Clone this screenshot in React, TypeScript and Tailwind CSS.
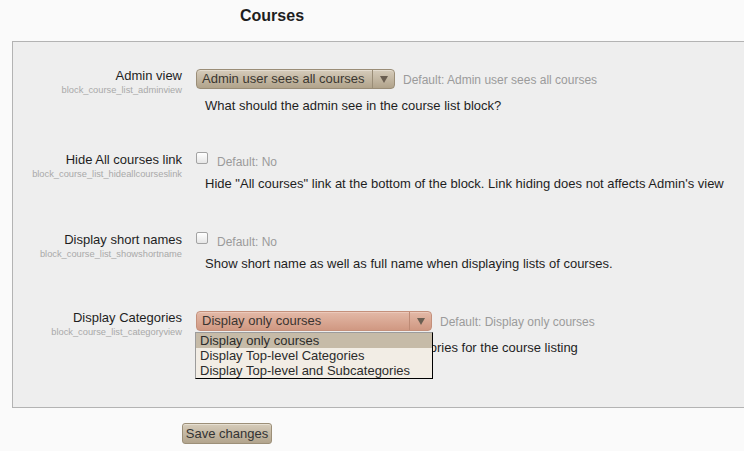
import React from "react";

type Row = {
  label: string;
  name: string;
  kind: "select" | "checkbox";
  defaultText: string;
  desc: string;
  gap: string;
};

const Arrow = () => (
  <svg width="8" height="7" viewBox="0 0 8 7" aria-hidden="true">
    <polygon points="0,0 8,0 4,7" fill="#6a5e51" />
  </svg>
);

const AdminSelect = () => (
  <div className="mt-[1px] flex h-[20px] w-[199px] items-stretch rounded-[4px] border border-[#9a8d77] bg-linear-to-b from-[#d6ccbb] to-[#b1a38b] text-[#3a3630] shadow-[inset_0_1px_0_#e4dccf]">
    <span className="flex-1 pl-[5px] text-[13px] leading-[18px]">Admin user sees all courses</span>
    <span className="flex w-[22px] items-center justify-center border-l border-[#9a8d77]">
      <Arrow />
    </span>
  </div>
);

const CategorySelect = () => (
  <div className="relative mt-[1px]">
    <div className="flex h-[20px] w-[236px] items-stretch rounded-[4px] border border-[#c4907b] bg-linear-to-b from-[#e3b9a7] to-[#d09882] text-[#3a3430] shadow-[inset_0_1px_0_#ecc9ba]">
      <span className="flex-1 pl-[5px] text-[13px] leading-[18px]">Display only courses</span>
      <span className="flex w-[22px] items-center justify-center border-l border-[#bd8a75]">
        <Arrow />
      </span>
    </div>
    <ul className="absolute left-[-1px] top-[21px] z-10 w-[238px] border border-t-[#9c9c9c] border-l-[#9c9c9c] border-r-black border-b-black bg-[#f2ede5] text-[13px] leading-[15px] text-[#2b2b2b]">
      <li className="bg-[#c6bba8] pl-[4px]">Display only courses</li>
      <li className="pl-[4px]">Display Top-level Categories</li>
      <li className="pl-[4px]">Display Top-level and Subcategories</li>
    </ul>
  </div>
);

const Checkbox = () => (
  <span className="block h-[12px] w-[12px] rounded-[2px] border border-[#a3a3a3] bg-linear-to-b from-white to-[#e6e6e6]" />
);

const rows: Row[] = [
  {
    label: "Admin view",
    name: "block_course_list_adminview",
    kind: "select",
    defaultText: "Default: Admin user sees all courses",
    desc: "What should the admin see in the course list block?",
    gap: "mt-0",
  },
  {
    label: "Hide All courses link",
    name: "block_course_list_hideallcourseslink",
    kind: "checkbox",
    defaultText: "Default: No",
    desc: 'Hide "All courses" link at the bottom of the block. Link hiding does not affects Admin\'s view',
    gap: "mt-[38px]",
  },
  {
    label: "Display short names",
    name: "block_course_list_showshortname",
    kind: "checkbox",
    defaultText: "Default: No",
    desc: "Show short name as well as full name when displaying lists of courses.",
    gap: "mt-[40px]",
  },
  {
    label: "Display Categories",
    name: "block_course_list_categoryview",
    kind: "select",
    defaultText: "Default: Display only courses",
    desc: "Select whether to view all course categories for the course listing",
    gap: "mt-[38px]",
  },
];

const SettingRow = ({ row, index }: { row: Row; index: number }) => (
  <div className={`flex ${row.gap}`}>
    <div className="w-[169px] shrink-0 text-right">
      <div className="text-[13px] leading-[16px] text-[#1e1e1e]">{row.label}</div>
      <div className="mt-[1px] text-[9.3px] leading-[11px] text-[#a9a9a9]">{row.name}</div>
    </div>
    <div className="ml-[14px] flex-1">
      {row.kind === "select" ? (
        <div className="flex items-center">
          {index === 0 ? <AdminSelect /> : <CategorySelect />}
          <span className="ml-[8px] mt-[2px] text-[12px] leading-[14px] text-[#9b9b9b]">{row.defaultText}</span>
        </div>
      ) : (
        <div className="flex items-start">
          <Checkbox />
          <span className="ml-[9px] mt-[3px] text-[12px] leading-[14px] text-[#9b9b9b]">{row.defaultText}</span>
        </div>
      )}
      <p className={`pl-[9px] text-[13px] leading-[16px] text-[#1e1e1e] whitespace-nowrap ${row.kind === "select" ? "mt-[9px]" : "mt-[7px]"}`}>
        {row.desc}
      </p>
    </div>
  </div>
);

export default function App() {
  return (
    <div className="h-[451px] w-[744px] overflow-hidden bg-[#fafafa] font-['Liberation_Sans',Arial,sans-serif]">
      <h2 className="pl-[240px] pt-[6px] text-[16px] font-bold leading-[20px] text-[#1e1e1e]">Courses</h2>
      <div className="ml-[12px] mt-[15px] border border-r-0 border-[#b3b3b3] bg-[#eeeeee] pb-[51px] pt-[26px]">
        {rows.map((row, i) => (
          <SettingRow key={row.name} row={row} index={i} />
        ))}
      </div>
      <button
        type="button"
        className="ml-[182px] mt-[15px] h-[21px] w-[90px] rounded-[3px] border border-[#9c8f78] bg-linear-to-b from-[#d6ccba] to-[#b2a48d] text-[13px] leading-[19px] text-[#333] shadow-[inset_0_1px_0_#e6dfd2]">
        Save changes
      </button>
    </div>
  );
}
